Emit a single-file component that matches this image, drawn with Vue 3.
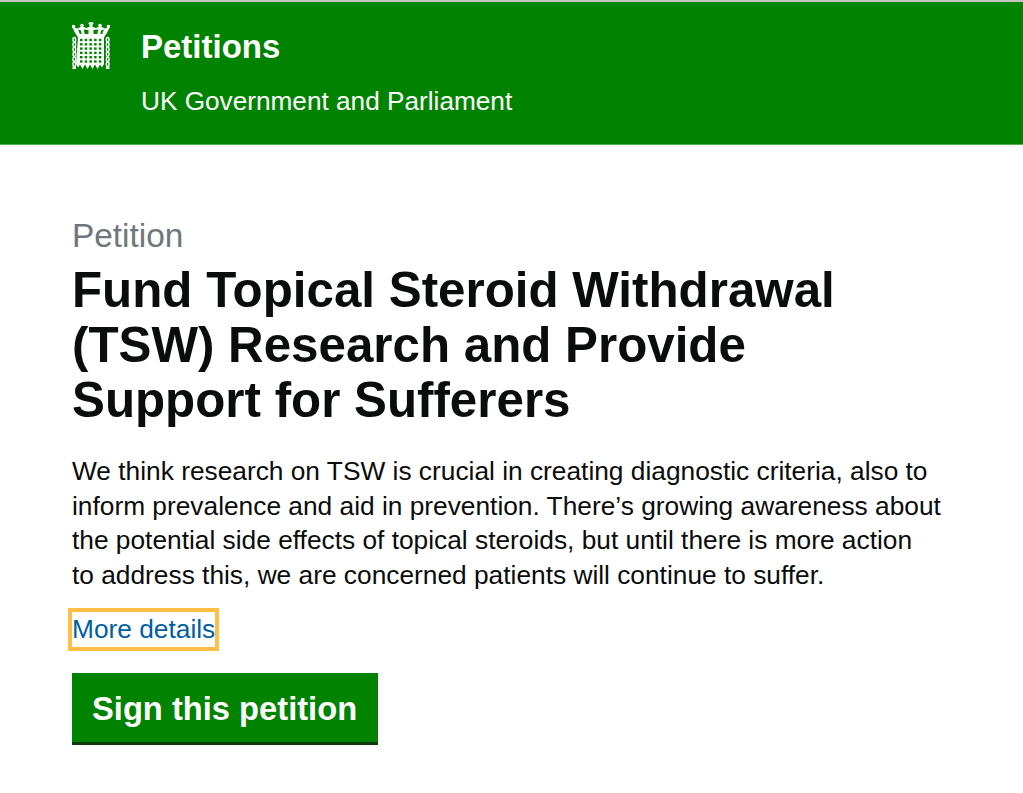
<script setup>
const cols = [0, 1, 2, 3, 4]
const rows = [0, 1, 2, 3, 4, 5]
const links = [0, 1, 2, 3, 4, 5]
const tips = [
  { x: 1.500, y: 4.500 },
  { x: 10, y: 3.500 },
  { x: 19, y: 3 },
  { x: 28, y: 3.500 },
  { x: 36.500, y: 4.500 }
]
</script>

<template>
  <div class="page">
    <header class="banner">
      <svg class="crest" viewBox="0 0 38 47" aria-hidden="true">
        <g fill="#fff">
          <path d="M1 5l4 1.500 5-2 4.500 1.500 4.500-2 4.500 2 5-1.500 4.500 2 4.500-1.500c-1 4-3.500 7-5.500 10.500h-26c-2-3.500-4.500-6.500-5.500-10.500z" />
          <circle v-for="t in tips" :key="t.x" :cx="t.x" :cy="t.y" r="1.800" />
          <rect x="16.500" y="0.500" width="5" height="1.400" />
          <rect x="18.200" y="0" width="1.600" height="4" />
          <path d="M6 15h26v27l-2 3.500-2-3-2.500 4.500-2.500-4.500-2.500 4.500-2.500-4.500-2.500 4.500-2.500-4.500-2.500 4.500-2.500-4.500-2 3-2-3.500z" />
        </g>
        <g fill="#008300">
          <path d="M6 7.500l3 1 .6 3.500h-1.800zM11.800 7.500l4.700.5v4h-3.900zM21.500 8l4.700-.5-.8 4.500h-3.900zM29 8.500l3-1-1.800 4.500h-1.800z" />
          <template v-for="r in rows" :key="r">
            <rect v-for="c in cols" :key="c" :x="8 + c * 4.700" :y="16.800 + r * 4.300" width="2.500" height="2.400" />
          </template>
        </g>
        <g fill="none" stroke="#fff" stroke-width="1.400">
          <rect v-for="n in links" :key="'l' + n" x="1" :y="15.500 + n * 4.900" width="2.600" height="4.200" rx="1.300" />
          <rect v-for="n in links" :key="'r' + n" x="34.400" :y="15.500 + n * 4.900" width="2.600" height="4.200" rx="1.300" />
        </g>
        <rect x="0.500" y="44.500" width="3.500" height="2.500" fill="#fff" />
        <rect x="34" y="44.500" width="3.500" height="2.500" fill="#fff" />
      </svg>
      <div class="banner-text">
        <div class="site">Petitions</div>
        <div class="org">UK Government and Parliament</div>
      </div>
    </header>
    <main class="content">
      <div class="eyebrow">Petition</div>
      <h1 class="title">Fund Topical Steroid Withdrawal (TSW) Research and Provide Support for Sufferers</h1>
      <p class="summary">We think research on TSW is crucial in creating diagnostic criteria, also to<br />inform prevalence and aid in prevention. There’s growing awareness about<br />the potential side effects of topical steroids, but until there is more action<br />to address this, we are concerned patients will continue to suffer.</p>
      <a class="more" href="#">More details</a>
      <a class="sign" href="#">Sign this petition</a>
    </main>
  </div>
</template>

<style>
html, body { background: #fff; }
</style>

<style scoped>
.page {
  font-family: "Liberation Sans", Arial, sans-serif;
  color: #0b0c0c;
  -webkit-font-smoothing: antialiased;
}
.banner {
  display: flex;
  align-items: flex-start;
  height: 142px;
  padding-left: 72px;
  background: #008300;
  border-top: 2px solid #c9c2c2;
  border-bottom: 1px solid #4caf50;
}
.crest {
  width: 38px;
  height: 47px;
  margin-top: 20px;
  flex: none;
}
.banner-text {
  margin-left: 31px;
  color: #fff;
}
.site {
  margin-top: 26px;
  font-size: 33px;
  line-height: 38px;
  font-weight: 700;
}
.org {
  margin-top: 20px;
  font-size: 26.200px;
  line-height: 30px;
}
.content {
  display: flex;
  flex-direction: column;
  align-items: flex-start;
  padding: 72px 72px 0;
}
.eyebrow {
  font-size: 33.400px;
  line-height: 38px;
  color: #6f777b;
}
.title {
  margin: 7px 0 0;
  width: 800px;
  font-size: 49.300px;
  line-height: 55px;
  font-weight: 700;
}
.summary {
  margin: 27px 0 0;
  width: 880px;
  font-size: 26.300px;
  line-height: 34.600px;
}
.more {
  margin: 20px 0 0;
  font-size: 26.300px;
  line-height: 35px;
  color: #005ea5;
  text-decoration: none;
  outline: 4px solid #ffbf47;
}
.sign {
  margin-top: 26px;
  padding: 16px 21px 13px 20px;
  font-size: 32.700px;
  line-height: 40px;
  font-weight: 700;
  color: #fff;
  text-decoration: none;
  background: #008300;
  border-bottom: 3px solid #0a3d0a;
}
</style>
